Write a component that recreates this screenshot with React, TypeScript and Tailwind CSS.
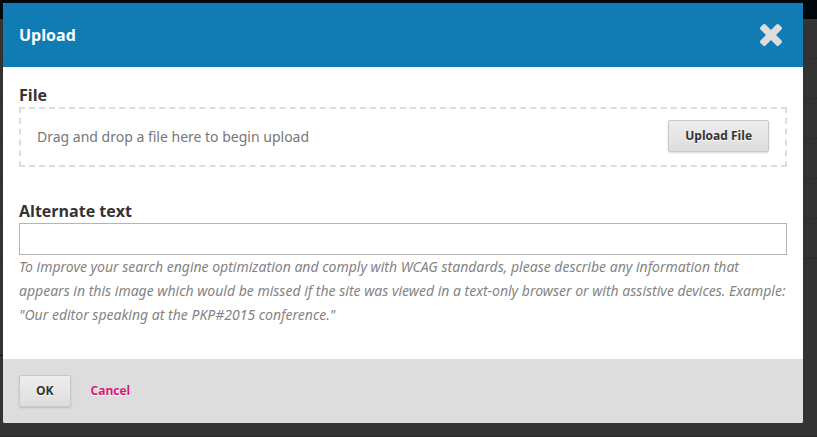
import React from 'react';

const buttonClass =
  'h-8 rounded-[2px] border border-[#c8c8c8] bg-linear-to-b from-[#eeeeee] to-[#dddddd] px-4 text-xs leading-[30px] font-bold text-[#333] shadow-[0_1px_2px_rgba(0,0,0,0.15)] [text-shadow:0_1px_0_white]';

function Backdrop() {
  return (
    <div aria-hidden="true" className="absolute inset-0 overflow-hidden">
      <div className="h-[19px] bg-[#00080e]" />
      <div className="h-10 border-b border-dashed border-[#282828]" />
      <div className="h-10 border-b border-dashed border-[#282828]" />
      <div className="h-10 border-b border-dashed border-[#282828]" />
      <div className="h-10 border-b border-dashed border-[#282828]" />
      <div className="h-10 border-b border-dashed border-[#282828]" />
      <div className="h-10 border-b border-[#2a2a2a]" />
      <div className="h-[97px] w-3 border-b border-[#111]" />
      <div className="h-[81px] border-b border-[#282828]" />
    </div>
  );
}

export default function App() {
  return (
    <div className="relative min-h-screen bg-[#333] pt-[3px] pr-[14px] pb-[14px] pl-[3px] font-['Open_Sans','Noto_Sans',sans-serif] text-[#333]">
      <Backdrop />
      <form
        role="dialog"
        aria-labelledby="title"
        className="relative overflow-hidden rounded-[2px] bg-white"
        onSubmit={(e) => e.preventDefault()}
      >
        <header className="flex h-16 items-center justify-between bg-[#117cb3] px-4 text-white">
          <h1 id="title" className="text-base leading-6 font-bold">Upload</h1>
          <button type="button" aria-label="Close" className="mr-[5px] text-[#dddddd]">
            <svg width="22" height="22" viewBox="302 366 1188 1188" fill="currentColor">
              <path d="M1490 1322q0 40-28 68l-136 136q-28 28-68 28t-68-28l-294-294-294 294q-28 28-68 28t-68-28l-136-136q-28-28-28-68t28-68l294-294-294-294q-28-28-28-68t28-68l136-136q28-28 68-28t68 28l294 294 294-294q28-28 68-28t68 28l136 136q28 28 28 68t-28 68l-294 294 294 294q28 28 28 68z" />
            </svg>
          </button>
        </header>
        <div className="px-4 pt-4 pb-8">
          <h2 className="text-base leading-6 font-bold">File</h2>
          <div className="flex items-start justify-between border-2 border-dashed border-[#ddd] px-4 py-[11px]">
            <span className="font-['Noto_Sans',sans-serif] text-sm leading-[34px] text-[#777]">Drag and drop a file here to begin upload</span>
            <button type="button" className={buttonClass}>Upload File</button>
          </div>
          <label htmlFor="alt" className="mt-8 block text-base leading-6 font-bold">Alternate text</label>
          <input id="alt" type="text" aria-describedby="hint" className="block h-8 w-full border border-[#b4b4b4] bg-white px-2 text-sm outline-none" />
          <p id="hint" className="font-['Noto_Sans',sans-serif] text-sm leading-6 text-[#848484] italic">
            To improve your search engine optimization and comply with WCAG standards, please describe any information that
            appears in this image which would be missed if the site was viewed in a text-only browser or with assistive devices.
            Example: "Our editor speaking at the PKP#2015 conference."
          </p>
        </div>
        <footer className="flex h-16 items-center gap-5 bg-[#ddd] px-4">
          <button type="submit" className={buttonClass}>OK</button>
          <a href="#" className="text-xs leading-6 font-bold text-[#d6177a] [text-shadow:0_1px_0_white]">Cancel</a>
        </footer>
      </form>
    </div>
  );
}
